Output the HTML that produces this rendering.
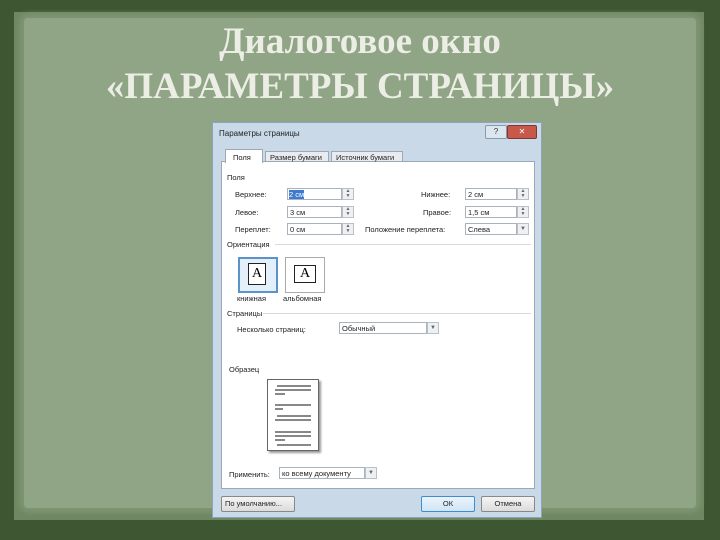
<!DOCTYPE html>
<html><head><meta charset="utf-8"><style>
*{margin:0;padding:0;box-sizing:border-box}
body{width:720px;height:540px;overflow:hidden;background:#3e5632;position:relative;font-family:"Liberation Sans",sans-serif}
.paper{position:absolute;left:14px;top:12px;width:690px;height:508px;background:#6f8862}
.paper2{position:absolute;left:24px;top:18px;width:672px;height:490px;background:#90a486;border-radius:4px;box-shadow:0 0 6px 4px #7f9675}
.t{position:absolute;left:0;width:720px;text-align:center;font-family:"Liberation Serif",serif;font-weight:bold;color:#eceee6;font-size:37px;line-height:40px}
.a{position:absolute}
.dlg{position:absolute;left:212px;top:122px;width:330px;height:396px;background:#c9d9e8;border:1px solid #8da4bd}
.s{font-size:7.5px;color:#222;position:absolute;white-space:nowrap}
.in{position:absolute;height:12px;background:#fff;border:1px solid #a9b3bd}
.sp{position:absolute;width:12px;height:12px;border:1px solid #b8c0c8;background:#eef0f2;font-size:5px;line-height:5px;text-align:center;color:#666}
.btn{position:absolute;height:16px;border:1px solid #888;border-radius:2px;background:linear-gradient(#f4f4f4,#dcdcdc);font-size:7.5px;text-align:center;line-height:14px;color:#222}
.hr{position:absolute;height:1px;background:#d5dbe1}
</style></head><body>
<div class="paper"></div><div class="paper2"></div>
<div class="t" style="top:22px">Диалоговое окно</div>
<div class="t" style="top:67px">«ПАРАМЕТРЫ СТРАНИЦЫ»</div>
<div class="dlg">
 <div class="s" style="left:6px;top:6px;font-size:8px">Параметры страницы</div>
 <div class="a" style="left:272px;top:2px;width:22px;height:14px;background:#dce6ef;border:1px solid #8a9aab;border-radius:2px;font-size:8px;text-align:center;line-height:12px;color:#333">?</div>
 <div class="a" style="left:294px;top:2px;width:30px;height:14px;background:#c8584a;border:1px solid #7a3a30;border-radius:2px;font-size:8px;text-align:center;line-height:12px;color:#fff">✕</div>
 <div class="a" style="left:8px;top:38px;width:314px;height:328px;background:#fff;border:1px solid #9aa9b8"></div>
 <div class="a" style="left:12px;top:26px;width:38px;height:14px;background:#fff;border:1px solid #9aa9b8;border-bottom:none"></div>
 <div class="s" style="left:20px;top:30px">Поля</div>
 <div class="a" style="left:52px;top:28px;width:64px;height:11px;background:#e8ecf0;border:1px solid #9aa9b8"></div>
 <div class="s" style="left:57px;top:30px">Размер бумаги</div>
 <div class="a" style="left:118px;top:28px;width:72px;height:11px;background:#e8ecf0;border:1px solid #9aa9b8"></div>
 <div class="s" style="left:123px;top:30px">Источник бумаги</div>
 <div class="s" style="left:14px;top:50px">Поля</div>
 <div class="s" style="left:22px;top:67px">Верхнее:</div>
 <div class="in" style="left:74px;top:65px;width:55px"><span class="s" style="left:1px;top:1px;background:#3e7ad0;color:#fff">2 см</span></div>
 <div class="sp" style="left:129px;top:65px">▲<br>▼</div>
 <div class="s" style="left:22px;top:85px">Левое:</div>
 <div class="in" style="left:74px;top:83px;width:55px"><span class="s" style="left:2px;top:1px">3 см</span></div>
 <div class="sp" style="left:129px;top:83px">▲<br>▼</div>
 <div class="s" style="left:22px;top:102px">Переплет:</div>
 <div class="in" style="left:74px;top:100px;width:55px"><span class="s" style="left:2px;top:1px">0 см</span></div>
 <div class="sp" style="left:129px;top:100px">▲<br>▼</div>
 <div class="s" style="left:208px;top:67px">Нижнее:</div>
 <div class="in" style="left:252px;top:65px;width:52px"><span class="s" style="left:2px;top:1px">2 см</span></div>
 <div class="sp" style="left:304px;top:65px">▲<br>▼</div>
 <div class="s" style="left:210px;top:85px">Правое:</div>
 <div class="in" style="left:252px;top:83px;width:52px"><span class="s" style="left:2px;top:1px">1,5 см</span></div>
 <div class="sp" style="left:304px;top:83px">▲<br>▼</div>
 <div class="s" style="left:152px;top:102px">Положение переплета:</div>
 <div class="in" style="left:252px;top:100px;width:52px"><span class="s" style="left:2px;top:1px">Слева</span></div>
 <div class="sp" style="left:304px;top:100px;font-size:6px;line-height:10px">▼</div>
 <div class="s" style="left:14px;top:117px">Ориентация</div><div class="hr" style="left:62px;top:121px;width:256px"></div>
 <div class="a" style="left:25px;top:134px;width:40px;height:36px;border:2px solid #5a93c8;background:#e3effa"></div>
 <div class="a" style="left:35px;top:140px;width:18px;height:22px;background:#fff;border:1px solid #222;font-family:'Liberation Serif',serif;font-size:14px;text-align:center;line-height:20px">A</div>
 <div class="a" style="left:72px;top:134px;width:40px;height:36px;border:1px solid #aaa;background:#fff"></div>
 <div class="a" style="left:81px;top:142px;width:22px;height:18px;background:#fff;border:1px solid #222;font-family:'Liberation Serif',serif;font-size:14px;text-align:center;line-height:16px">A</div>
 <div class="s" style="left:24px;top:171px">книжная</div>
 <div class="s" style="left:70px;top:171px">альбомная</div>
 <div class="s" style="left:14px;top:186px">Страницы</div><div class="hr" style="left:50px;top:190px;width:268px"></div>
 <div class="s" style="left:24px;top:202px">Несколько страниц:</div>
 <div class="in" style="left:126px;top:199px;width:88px"><span class="s" style="left:2px;top:1px">Обычный</span></div>
 <div class="sp" style="left:214px;top:199px;font-size:6px;line-height:10px">▼</div>
 <div class="s" style="left:16px;top:242px">Образец</div>
 <div class="a" style="left:54px;top:256px;width:52px;height:72px;background:#fff;border:1px solid #666;box-shadow:2px 2px 2px #999"></div>
 <svg class="a" style="left:54px;top:256px" width="52" height="72"><g stroke="#111" stroke-width="1">
 <line x1="10" y1="7" x2="44" y2="7"/><line x1="8" y1="11" x2="44" y2="11"/><line x1="8" y1="15" x2="18" y2="15"/>
 <line x1="8" y1="26" x2="44" y2="26"/><line x1="8" y1="30" x2="16" y2="30"/><line x1="10" y1="37" x2="44" y2="37"/><line x1="8" y1="41" x2="44" y2="41"/>
 <line x1="8" y1="53" x2="44" y2="53"/><line x1="8" y1="57" x2="44" y2="57"/><line x1="8" y1="61" x2="18" y2="61"/><line x1="10" y1="66" x2="44" y2="66"/></g></svg>
 <div class="s" style="left:16px;top:347px">Применить:</div>
 <div class="in" style="left:66px;top:344px;width:86px"><span class="s" style="left:2px;top:1px">ко всему документу</span></div>
 <div class="sp" style="left:152px;top:344px;font-size:6px;line-height:10px">▼</div>
 <div class="btn" style="left:8px;top:373px;width:74px;text-align:left;padding-left:3px">По умолчанию...</div>
 <div class="btn" style="left:208px;top:373px;width:54px;border-color:#3d8ed0;background:linear-gradient(#eaf4fb,#cfe4f5)">ОК</div>
 <div class="btn" style="left:268px;top:373px;width:54px">Отмена</div>
</div>
</body></html>
